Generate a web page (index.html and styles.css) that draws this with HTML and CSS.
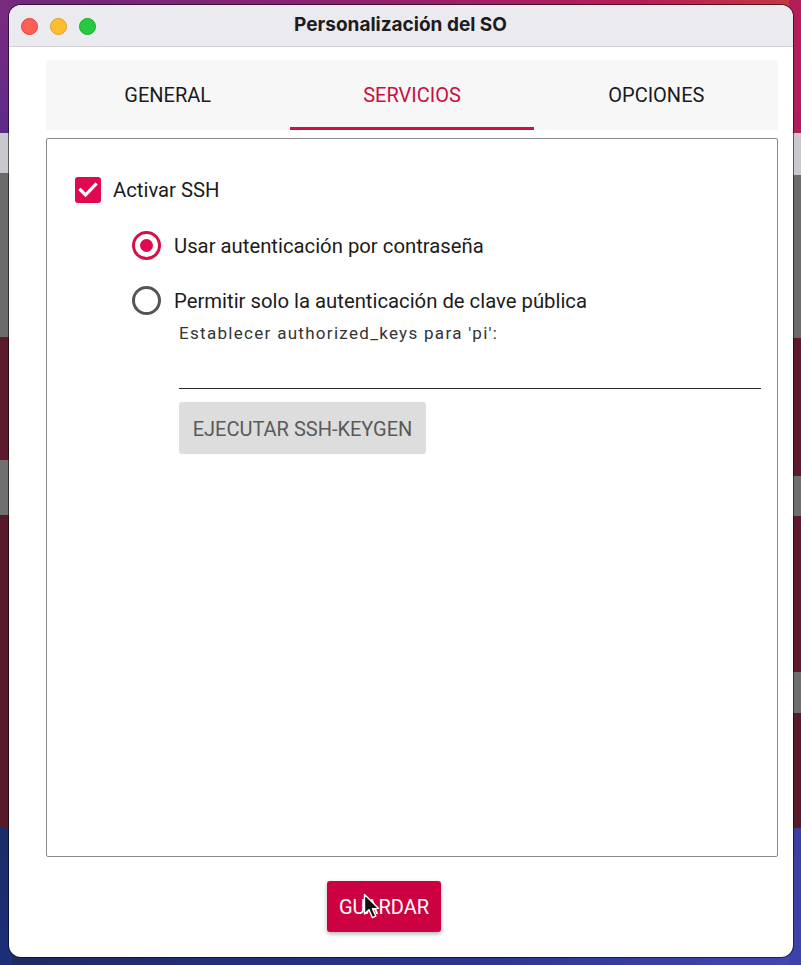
FILE: index.html
```html
<!DOCTYPE html>
<html lang="es">
<head>
<meta charset="utf-8">
<title>Personalización del SO</title>
<link rel="stylesheet" href="styles.css">
</head>
<body>
<div class="window">
  <div class="titlebar">
    <div class="lights">
      <span class="light red"></span>
      <span class="light yellow"></span>
      <span class="light green"></span>
    </div>
    <div class="title">Personalización del SO</div>
  </div>
  <div class="content">
    <div class="tabs">
      <div class="tab">GENERAL</div>
      <div class="tab active">SERVICIOS</div>
      <div class="tab">OPCIONES</div>
    </div>
    <div class="panel">
      <div class="row check-row">
        <span class="checkbox">
          <svg width="26" height="26" viewBox="0 0 26 26"><path d="M5.5 13 L10.5 18 L20.5 7.5" fill="none" stroke="#fff" stroke-width="3.2" stroke-linecap="square"/></svg>
        </span>
        <span class="label">Activar SSH</span>
      </div>
      <div class="options">
        <div class="row radio-row">
          <span class="radio checked"><span class="dot"></span></span>
          <span class="label">Usar autenticación por contraseña</span>
        </div>
        <div class="row radio-row">
          <span class="radio"></span>
          <span class="label">Permitir solo la autenticación de clave pública</span>
        </div>
        <div class="keys">
          <div class="keys-label">Establecer authorized_keys para 'pi':</div>
          <div class="keys-input"></div>
          <div class="keygen">EJECUTAR SSH-KEYGEN</div>
        </div>
      </div>
    </div>
    <div class="footer">
      <div class="save">GUARDAR
        <svg class="cursor" width="20" height="28" viewBox="0 0 20 28"><path d="M1.5 1.5 L1.5 21 L6 16.8 L9.4 24.6 L12.8 23.1 L9.5 15.6 L15.6 15.4 Z" fill="#111" stroke="#fff" stroke-width="1.4" stroke-linejoin="round"/></svg>
      </div>
    </div>
  </div>
</div>
</body>
</html>
```

FILE: styles.css
```css
html, body {
  margin: 0;
  padding: 0;
}
body {
  width: 801px;
  height: 965px;
  overflow: hidden;
  font-family: Roboto, "Liberation Sans", sans-serif;
  padding: 5px 8px 8px 9px;
  box-sizing: border-box;
  background:
    linear-gradient(to bottom,
      #7b2a7e 0px, #5d2b8b 133px,
      #c9c8cc 133px, #c9c8cc 173px,
      #6b6b6b 173px, #6b6b6b 337px,
      #5c1a2c 337px, #5c1a2c 460px,
      #707070 460px, #707070 515px,
      #571a2b 515px, #571a2b 828px,
      #1c2b68 828px, #1c2f78 965px) left top / 12px 100% no-repeat,
    linear-gradient(to bottom,
      #b51d58 0px, #b01c5a 133px,
      #c9c8cc 133px, #c9c8cc 175px,
      #6b6b6b 175px, #6b6b6b 338px,
      #5c1a2c 338px, #5c1a2c 476px,
      #6e6e6e 476px, #6e6e6e 516px,
      #5c1a2c 516px, #5c1a2c 672px,
      #6e6e6e 672px, #6e6e6e 713px,
      #571a2b 713px, #571a2b 828px,
      #3a3fa0 828px, #3d42a8 965px) right top / 12px 100% no-repeat,
    linear-gradient(to right, #1d2a62, #2a3590 60%, #4347b0) left bottom / 100% 20px no-repeat,
    linear-gradient(to right, #6e2a80, #8a2272 40%, #b81c55 80%, #c43a40) left top / 100% 20px no-repeat,
    #5a1a2b;
}

.window {
  width: 784px;
  height: 952px;
  background: #fff;
  border-radius: 12px;
  overflow: hidden;
  display: flex;
  flex-direction: column;
  box-shadow: 0 0 0 1px rgba(0,0,0,0.55);
}

.titlebar {
  height: 42px;
  flex: none;
  background: #ebeaef;
  border-bottom: 1px solid #d2d2d4;
  box-sizing: border-box;
  display: flex;
  align-items: center;
  position: relative;
}
.lights {
  display: flex;
  gap: 12px;
  padding-left: 12px;
  padding-top: 1px;
}
.light {
  width: 17px;
  height: 17px;
  border-radius: 50%;
  box-sizing: border-box;
}
.red { background: #fe5f57; border: 1px solid #e0443e; }
.yellow { background: #febc2e; border: 1px solid #dea123; }
.green { background: #28c840; border: 1px solid #1aab29; }
.title {
  position: absolute;
  left: 0;
  right: 0;
  top: 0;
  bottom: 0;
  display: flex;
  align-items: center;
  justify-content: center;
  font-family: Inter, "Open Sans", sans-serif;
  font-weight: 700;
  font-size: 19px;
  color: #1c1c1e;
  padding-right: 1px;
  padding-bottom: 3px;
}

.content {
  flex: 1;
  padding: 13px 15px 0 37px;
  display: flex;
  flex-direction: column;
}

.tabs {
  height: 70px;
  background: #f7f7f7;
  display: flex;
  flex: none;
}
.tab {
  flex: 1;
  display: flex;
  align-items: center;
  justify-content: center;
  font-size: 20px;
  color: #1b1b1b;
  box-sizing: border-box;
}
.tab.active {
  color: #c8103e;
  border-bottom: 3px solid #d10f45;
  padding-top: 3px;
  margin: 0 1px;
}

.panel {
  margin-top: 8px;
  height: 719px;
  box-sizing: border-box;
  border: 1px solid #8a8a8a;
  border-radius: 2px;
  padding: 38px 16px 0 28px;
  flex: none;
}

.row {
  display: flex;
  align-items: center;
}
.label {
  font-size: 20.3px;
  color: #1c1c1c;
}
.check-row {
  height: 26px;
}
.checkbox {
  width: 26px;
  height: 26px;
  border-radius: 3px;
  background: #e0084e;
  margin-right: 12px;
  display: flex;
}
.options {
  padding-left: 57px;
  padding-top: 2px;
}
.radio-row {
  height: 29px;
  margin-top: 26px;
}
.radio {
  width: 29px;
  height: 29px;
  box-sizing: border-box;
  border-radius: 50%;
  border: 3px solid #555;
  margin-right: 13px;
  display: flex;
  align-items: center;
  justify-content: center;
}
.radio.checked {
  border-color: #d90d48;
}
.dot {
  width: 13px;
  height: 13px;
  border-radius: 50%;
  background: #e0084e;
}

.keys {
  padding-left: 47px;
  padding-top: 7px;
}
.keys-label {
  font-size: 17px;
  color: #333;
  letter-spacing: 1.3px;
  height: 22px;
  line-height: 22px;
}
.keys-input {
  margin-top: 44px;
  height: 1px;
  background: #2a2a2a;
}
.keygen {
  margin-top: 13px;
  width: 247px;
  height: 52px;
  box-sizing: border-box;
  background: #dddddd;
  border-radius: 3px;
  color: #5a5a5a;
  font-size: 20px;
  display: flex;
  align-items: center;
  justify-content: center;
  padding-top: 1px;
}

.footer {
  display: flex;
  justify-content: center;
  padding-top: 24px;
  padding-right: 56px;
}
.save {
  position: relative;
  width: 114px;
  height: 51px;
  background: #cc0142;
  color: #fff;
  font-size: 20px;
  border-radius: 3px;
  display: flex;
  align-items: center;
  justify-content: center;
  box-shadow: 0 2px 4px rgba(0,0,0,0.3);
}
.cursor {
  position: absolute;
  left: 36px;
  top: 12px;
}
```
